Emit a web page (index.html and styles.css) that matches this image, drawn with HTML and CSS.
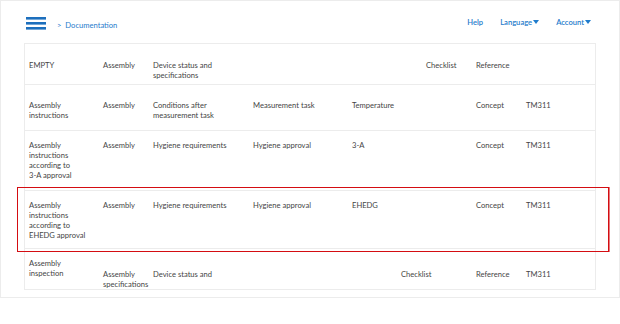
FILE: index.html
```html
<!DOCTYPE html>
<html lang="en">
<head>
<meta charset="utf-8">
<title>Documentation</title>
<link rel="stylesheet" href="styles.css">
</head>
<body>
<div class="frame">
  <header class="topbar">
    <button class="menu" aria-label="Menu">
      <svg width="20" height="13" viewBox="0 0 20 13"><rect x="0" y="0" width="20" height="2.6"/><rect x="0" y="5" width="20" height="2.6"/><rect x="0" y="10" width="20" height="2.6"/></svg>
    </button>
    <nav class="crumb"><span class="gt">&gt;</span> Documentation</nav>
    <div class="spacer"></div>
    <nav class="links">
      <a class="link">Help</a>
      <a class="link">Language<span class="caret"></span></a>
      <a class="link">Account<span class="caret"></span></a>
    </nav>
  </header>

  <div class="table">
    <div class="row head">
      <div class="c1">EMPTY</div>
      <div class="c2">Assembly</div>
      <div class="c3">Device status and specifications</div>
      <div class="c7">Checklist</div>
      <div class="c8">Reference</div>
    </div>
    <div class="row r1">
      <div class="c1">Assembly instructions</div>
      <div class="c2">Assembly</div>
      <div class="c3">Conditions after measurement task</div>
      <div class="c4">Measurement task</div>
      <div class="c5">Temperature</div>
      <div class="c8">Concept</div>
      <div class="c9">TM311</div>
    </div>
    <div class="row r2">
      <div class="c1">Assembly instructions according to <span class="nowrap">3-A approval</span></div>
      <div class="c2">Assembly</div>
      <div class="c3">Hygiene requirements</div>
      <div class="c4">Hygiene approval</div>
      <div class="c5">3-A</div>
      <div class="c8">Concept</div>
      <div class="c9">TM311</div>
    </div>
    <div class="row r3 selected">
      <div class="c1">Assembly instructions according to <span class="nowrap">EHEDG approval</span></div>
      <div class="c2">Assembly</div>
      <div class="c3">Hygiene requirements</div>
      <div class="c4">Hygiene approval</div>
      <div class="c5">EHEDG</div>
      <div class="c8">Concept</div>
      <div class="c9">TM311</div>
    </div>
    <div class="row r4">
      <div class="c1">Assembly inspection</div>
      <div class="c2 low">Assembly specifications</div>
      <div class="c3 low">Device status and</div>
      <div class="c6 low">Checklist</div>
      <div class="c8 low">Reference</div>
      <div class="c9 low">TM311</div>
    </div>
  </div>
</div>
</body>
</html>
```

FILE: styles.css
```css
* { box-sizing: border-box; }

html, body {
  margin: 0;
  padding: 0;
  background: #ffffff;
}

body {
  font-family: Lato, "Liberation Sans", sans-serif;
  font-size: 7.6px;
  line-height: 10px;
  color: #454545;
}

.frame {
  width: 620px;
  height: 298px;
  border: 1px solid #ececec;
}

.topbar {
  display: flex;
  align-items: flex-start;
  height: 42px;
  padding: 0 28px 0 25px;
}

.menu {
  border: 0;
  background: none;
  padding: 0;
  margin-top: 16px;
  width: 20px;
  height: 13px;
  display: block;
}
.menu svg { display: block; fill: #1d6fbd; }

.crumb {
  margin-left: 11px;
  margin-top: 19px;
  color: #1f7ccc;
  white-space: nowrap;
}
.crumb .gt { margin-right: 2px; }

.spacer { flex: 1; }

.links {
  display: flex;
  gap: 17px;
  margin-top: 16px;
}

.link {
  color: #1f7ccc;
  font-weight: 600;
  display: inline-flex;
  align-items: center;
  white-space: nowrap;
}

.caret {
  display: inline-block;
  width: 0;
  height: 0;
  margin-left: 1px;
  border-left: 3px solid transparent;
  border-right: 3px solid transparent;
  border-top: 4px solid #1f7ccc;
}

.table {
  margin-left: 23px;
  width: 572px;
  height: 247px;
  border: 1px solid #ececec;
}

.row {
  position: relative;
  display: grid;
  grid-template-columns: 74px 50px 100px 99px 49px 25px 50px 50px 1fr;
  padding-left: 4px;
  border-bottom: 1px solid #ececec;
}

.row > div { padding-right: 4px; min-width: 0; }
.row > .c1 { padding-right: 12px; }
.nowrap { white-space: nowrap; }

.c1 { grid-column: 1; }
.c2 { grid-column: 2; }
.c3 { grid-column: 3; }
.c4 { grid-column: 4; }
.c5 { grid-column: 5 / span 3; }
.c6 { grid-column: 6 / span 2; }
.c7 { grid-column: 7; }
.c8 { grid-column: 8; }
.c9 { grid-column: 9; }

.head { height: 41px; padding-top: 16px; }
.r1   { height: 46px; padding-top: 14.5px; }
.r2   { height: 60px; padding-top: 8.5px; }
.r3   { height: 58px; padding-top: 8.5px; }
.r4   { border-bottom: 0; padding-top: 9px; }

.low { margin-top: 10.5px; }

.selected::after {
  content: "";
  position: absolute;
  left: -8px;
  right: -14px;
  top: -4px;
  bottom: -4px;
  border: 1px solid #d40d12;
  box-shadow: 1px 0 0 rgba(212, 13, 18, 0.55);
  pointer-events: none;
}
```
